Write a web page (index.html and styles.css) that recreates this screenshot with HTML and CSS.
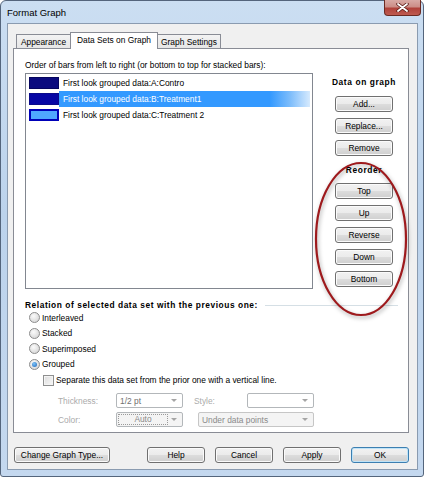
FILE: index.html
```html
<!DOCTYPE html>
<html lang="en">

<head>
    <meta charset="UTF-8">
    <meta name="viewport" content="width=device-width, initial-scale=1.0">
    <title>Format Graph</title>
    <link rel="stylesheet" href="styles.css">
</head>

<body>
    <div class="window">
        <!-- Barra de título -->
        <div class="titlebar">
            <span class="title">Format Graph</span>
            <div class="close">
                <svg width="13" height="9" viewBox="0 0 13 9">
                    <path d="M2 1 L11 8 M11 1 L2 8" stroke="#5a1b16" stroke-width="3.4" stroke-linecap="round" />
                    <path d="M2 1 L11 8 M11 1 L2 8" stroke="#fff" stroke-width="1.8" stroke-linecap="round" />
                </svg>
            </div>
        </div>

        <div class="client">
            <!-- Abas -->
            <div class="tabs">
                <div class="tab tab-appearance">Appearance</div>
                <div class="tab tab-active">Data Sets on Graph</div>
                <div class="tab tab-settings">Graph Settings</div>
            </div>

            <div class="panel">
                <p class="caption">Order of bars from left to right (or bottom to top for stacked bars):</p>

                <div class="data-area">
                    <ul class="listbox">
                        <li class="item">
                            <span class="swatch swatch-a"></span>
                            <span class="item-text">First look grouped data:A:Contro</span>
                        </li>
                        <li class="item item-selected">
                            <span class="swatch swatch-b"></span>
                            <span class="item-text">First look grouped data:B:Treatment1</span>
                        </li>
                        <li class="item">
                            <span class="swatch swatch-c"></span>
                            <span class="item-text">First look grouped data:C:Treatment 2</span>
                        </li>
                    </ul>

                    <div class="side">
                        <p class="side-title">Data on graph</p>
                        <button class="btn btn-side">Add...</button>
                        <button class="btn btn-side">Replace...</button>
                        <button class="btn btn-side">Remove</button>
                        <p class="side-title reorder-title">Reorder</p>
                        <button class="btn btn-side">Top</button>
                        <button class="btn btn-side">Up</button>
                        <button class="btn btn-side">Reverse</button>
                        <button class="btn btn-side">Down</button>
                        <button class="btn btn-side">Bottom</button>
                    </div>
                </div>

                <!-- Relação com o conjunto anterior -->
                <div class="relation">
                    <div class="group-title">
                        <span>Relation of selected data set with the previous one:</span>
                        <span class="rule"></span>
                    </div>
                    <div class="radio"><span class="radio-dot"></span>Interleaved</div>
                    <div class="radio"><span class="radio-dot"></span>Stacked</div>
                    <div class="radio"><span class="radio-dot"></span>Superimposed</div>
                    <div class="radio"><span class="radio-dot checked"></span>Grouped</div>
                    <div class="check"><span class="check-box"></span>Separate this data set from the prior one with a vertical line.</div>

                    <div class="line-row">
                        <span class="dim-label">Thickness:</span>
                        <div class="combo combo-small"><span>1/2 pt</span><i class="arrow"></i></div>
                        <span class="dim-label style-label">Style:</span>
                        <div class="combo combo-small"><span></span><i class="arrow"></i></div>
                    </div>
                    <div class="line-row">
                        <span class="dim-label">Color:</span>
                        <div class="combo combo-small combo-auto"><span class="auto-box">Auto</span><i class="arrow"></i></div>
                        <div class="combo combo-wide combo-grey"><span>Under data points</span><i class="arrow"></i></div>
                    </div>
                </div>
            </div>

            <!-- Botões -->
            <div class="footer">
                <button class="btn btn-type">Change Graph Type...</button>
                <button class="btn btn-footer">Help</button>
                <button class="btn btn-footer">Cancel</button>
                <button class="btn btn-footer">Apply</button>
                <button class="btn btn-footer btn-default">OK</button>
            </div>
        </div>

        <!-- Destaque vermelho -->
        <svg class="ring" width="424" height="477" viewBox="0 0 424 477">
            <ellipse cx="360" cy="238" rx="45" ry="76" fill="none" stroke="#9e1a1d" stroke-width="2.2" />
        </svg>
    </div>
</body>

</html>
```

FILE: styles.css
```css
/* Configuração geral */
* {
    box-sizing: border-box;
}

body {
    margin: 0;
    background: #fff;
    font-family: "Liberation Sans", Arial, sans-serif;
    font-size: 8.4px;
    color: #000;
}

p {
    margin: 0;
}

.window {
    position: relative;
    width: 424px;
    height: 477px;
    border: 1px solid #54657c;
    border-radius: 6px 6px 3px 3px;
    background: linear-gradient(#cbdef2, #bcd3ec 45%, #c4d8ef);
    display: flex;
    flex-direction: column;
}

/* Barra de título */
.titlebar {
    height: 22px;
    display: flex;
    align-items: flex-start;
}

.title {
    font-size: 9.5px;
    padding: 6px 0 0 6px;
}

.close {
    margin-left: auto;
    margin-right: 2px;
    margin-top: -1px;
    width: 37px;
    height: 16px;
    border: 1px solid #6b2a22;
    border-top: none;
    border-radius: 0 0 4px 4px;
    background: linear-gradient(#d8aaa5, #cc8e87 45%, #b0423a 55%, #be5a50);
    display: flex;
    align-items: center;
    justify-content: center;
}

.client {
    margin: 0 5px 0 6px;
    height: 447px;
    border: 1px solid #8a9bb0;
    background: #f0f0f0;
    padding: 8px 8px 0 5px;
    display: flex;
    flex-direction: column;
}

/* Abas */
.tabs {
    display: flex;
    align-items: flex-end;
    height: 16px;
    padding-left: 3px;
}

.tab {
    height: 14px;
    border: 1px solid #898c95;
    border-bottom: none;
    background: linear-gradient(#f3f3f3, #e6e6e6);
    display: flex;
    align-items: center;
    justify-content: center;
}

.tab-appearance {
    width: 54px;
    border-right: none;
}

.tab-settings {
    width: 63px;
    border-left: none;
}

.tab-active {
    position: relative;
    z-index: 1;
    width: 88px;
    height: 17px;
    margin-bottom: -1px;
    background: #fff;
    padding-bottom: 2px;
}

.panel {
    width: 396px;
    height: 385px;
    border: 1px solid #898c95;
    background: #fff;
    padding: 11px 0 0 11px;
}

.caption {
    line-height: 10px;
    margin-bottom: 3px;
}

.data-area {
    display: grid;
    grid-template-columns: 288px 1fr;
}

/* Lista */
.listbox {
    list-style: none;
    margin: 0;
    height: 216px;
    border: 1px solid #828790;
    padding: 1px 0 0 1px;
}

.item {
    height: 16px;
    display: flex;
    align-items: center;
}

.swatch {
    width: 30px;
    height: 12px;
    margin-left: 2px;
}

.swatch-a {
    background: #0b0b7e;
    border: 1px solid #05055e;
}

.swatch-b {
    background: #0606a4;
    border: 1px solid #0a0a8a;
}

.swatch-c {
    background: #4fa7ff;
    border: 2px solid #0000b8;
}

.item-text {
    flex: 1;
    height: 16px;
    line-height: 16px;
    padding-left: 4px;
    margin-right: 2px;
}

.item-selected .item-text {
    color: #fff;
    background: linear-gradient(to right, #3399ff 0, #3399ff 84%, #7cbcfb 92%, #d6eafe 100%);
}

/* Coluna lateral */
.side {
    padding: 4px 0 0 7px;
    display: flex;
    flex-direction: column;
    align-items: center;
}

.side-title {
    font-weight: bold;
    letter-spacing: 0.6px;
    line-height: 10px;
    margin-bottom: 9px;
}

.reorder-title {
    margin-top: 3px;
    margin-bottom: 8px;
}

.btn {
    font-family: inherit;
    font-size: 8.4px;
    color: #000;
    height: 16px;
    padding: 0;
    border: 1px solid #707070;
    border-radius: 3px;
    background: linear-gradient(#f2f2f2 0%, #ebebeb 50%, #dddddd 50%, #cfcfcf 100%);
    box-shadow: inset 0 0 0 1px #fbfbfb;
}

.btn-side {
    width: 58px;
    margin-bottom: 6px;
}

/* Relação */
.relation {
    margin-top: 7px;
}

.group-title {
    display: flex;
    align-items: center;
    font-weight: bold;
    letter-spacing: 0.55px;
    line-height: 10px;
}

.rule {
    flex: 1;
    border-top: 1px solid #d5dfe5;
    margin: 0 10px 0 7px;
}

.radio {
    height: 15.5px;
    display: flex;
    align-items: center;
    padding-left: 4px;
}

.radio-dot {
    width: 11px;
    height: 11px;
    border-radius: 50%;
    border: 1px solid #8c8c8c;
    background: radial-gradient(circle at 40% 35%, #fbfbfb, #dcdcdc 70%, #cfcfcf);
    margin-right: 2px;
    display: flex;
    align-items: center;
    justify-content: center;
}

.radio-dot.checked::after {
    content: "";
    width: 5px;
    height: 5px;
    border-radius: 50%;
    background: radial-gradient(circle at 40% 35%, #7cc4f8, #1f64b8);
}

.check {
    height: 16px;
    display: flex;
    align-items: center;
    padding-left: 18px;
}

.check-box {
    width: 11px;
    height: 11px;
    border: 1px solid #8e8f8f;
    background: linear-gradient(135deg, #dcdcdc, #f8f8f8);
    box-shadow: inset 0 0 0 1px #f4f4f4;
    margin-right: 2px;
}

.line-row {
    display: flex;
    align-items: center;
    padding-left: 33px;
    margin-top: 4px;
}

.check + .line-row {
    margin-top: 5px;
}

.dim-label {
    width: 58px;
    color: #ababab;
}

.style-label {
    width: 53px;
    margin-left: 11px;
}

.combo {
    height: 15px;
    border: 1px solid #b3b7ba;
    border-radius: 2px;
    background: #fff;
    color: #707070;
    display: flex;
    align-items: center;
    justify-content: space-between;
    padding: 0 5px 0 3px;
}

.combo-small {
    width: 67px;
}

.combo-wide {
    width: 116px;
    margin-left: 15px;
}

.combo-grey {
    background: #f4f4f4;
    border-color: #c6c6c6;
    color: #8a8a8a;
}

.combo-auto {
    background: #f4f4f4;
    padding-left: 1px;
}

.auto-box {
    width: 50px;
    height: 11px;
    border: 1px dotted #9a9a9a;
    text-align: center;
    line-height: 9px;
    color: #8a8a8a;
}

.arrow {
    width: 0;
    height: 0;
    border-left: 3px solid transparent;
    border-right: 3px solid transparent;
    border-top: 3px solid #a5a5a5;
}

/* Rodapé */
.footer {
    display: flex;
    margin-top: 14px;
    padding-left: 1px;
}

.btn-type {
    width: 96px;
    margin-right: auto;
}

.btn-footer {
    width: 58px;
    margin-left: 10px;
}

.btn-default {
    border-color: #3c7fb1;
    box-shadow: inset 0 0 0 1px #bfe3f7;
}

/* Destaque */
.ring {
    position: absolute;
    left: 0;
    top: 0;
    pointer-events: none;
    filter: drop-shadow(1px 2px 2px rgba(0, 0, 0, 0.35));
}
```
